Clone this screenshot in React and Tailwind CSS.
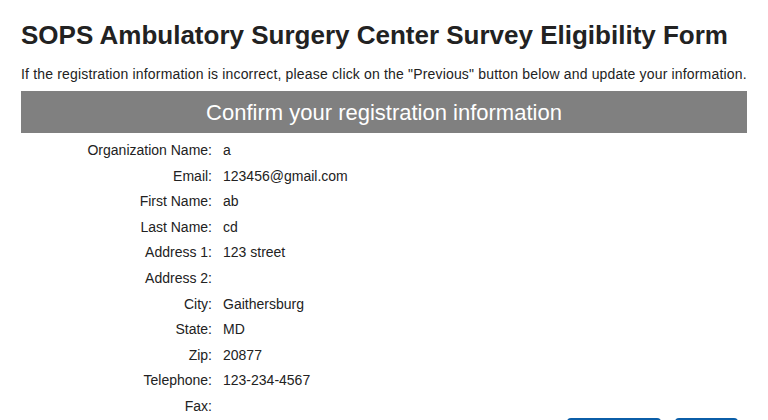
const rows = [
  ['Organization Name:', 'a'],
  ['Email:', '123456@gmail.com'],
  ['First Name:', 'ab'],
  ['Last Name:', 'cd'],
  ['Address 1:', '123 street'],
  ['Address 2:', ''],
  ['City:', 'Gaithersburg'],
  ['State:', 'MD'],
  ['Zip:', '20877'],
  ['Telephone:', '123-234-4567'],
  ['Fax:', ''],
]

export default function App() {
  return (
    <div className="min-h-[420px] bg-white px-[21px] text-[#222] font-['Liberation_Sans',Arial,sans-serif]">
      <h1 className="pt-[20px] text-[26px] font-bold leading-[30px]">
        SOPS Ambulatory Surgery Center Survey Eligibility Form
      </h1>
      <p className="mt-[14px] text-[14px] leading-[20px] whitespace-nowrap tracking-[0.17px]">
        If the registration information is incorrect, please click on the "Previous" button below and update your information.
      </p>
      <div className="mt-[7px] h-[42px] w-[726px] bg-[#808080] flex items-center justify-center text-white text-[22px]">
        Confirm your registration information
      </div>
      <div className="mt-[5px] grid grid-cols-[191px_1fr] gap-x-[11px] text-[14px] leading-[25.6px]">
        {rows.map(([label, value]) => (
          <div key={label} className="contents">
            <div className="text-right">{label}</div>
            <div>{value || '\u00a0'}</div>
          </div>
        ))}
      </div>
      <div className="-mt-[2px] flex justify-end gap-[14px] pr-[9px]">
        <button className="w-[94px] h-[34px] rounded-[4px] bg-[#0b5ea8] text-white text-[14px]">Previous</button>
        <button className="w-[63px] h-[34px] rounded-[4px] bg-[#0b5ea8] text-white text-[14px]">Next</button>
      </div>
    </div>
  )
}
